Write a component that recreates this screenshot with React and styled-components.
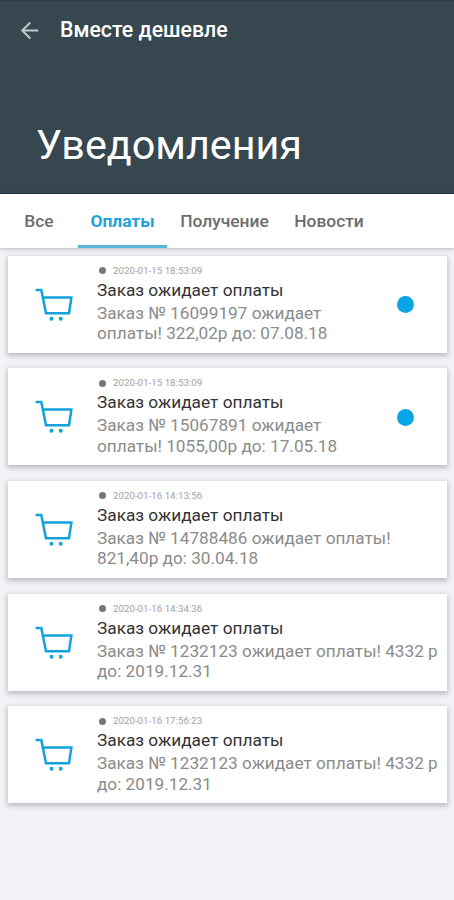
import React from "react";
import styled, { createGlobalStyle } from "styled-components";

const GlobalStyle = createGlobalStyle`
  * { box-sizing: border-box; }
  body { margin: 0; background: #f2f2f7; font-family: Roboto, "Noto Sans", sans-serif; }
`;

const Screen = styled.div`
  display: flex;
  flex-direction: column;
  width: 454px;
  height: 900px;
  overflow: hidden;
  background: #f2f2f7;
`;

const Header = styled.header`
  display: flex;
  flex-direction: column;
  justify-content: space-between;
  height: 194px;
  padding: 14px 20px 21px;
  background: #37474f;
  border-top: 1px solid #2f3c44;
  border-bottom: 1px solid #22323b;
  color: #fff;
`;

const Toolbar = styled.div`
  display: flex;
  align-items: center;
  height: 30px;
`;

const BackButton = styled.button`
  display: flex;
  width: 20px;
  height: 20px;
  margin: 2px 20px 0 0;
  padding: 0;
  border: 0;
  background: none;
  color: #c3cacd;
`;

const AppName = styled.span`
  font-size: 21.3px;
  font-weight: 500;
  line-height: 30px;
  white-space: nowrap;
`;

const PageTitle = styled.h1`
  margin: 0 0 0 16px;
  font-size: 41.3px;
  font-weight: 400;
  line-height: 54px;
  white-space: nowrap;
`;

const Tabs = styled.nav`
  display: flex;
  flex: none;
  height: 54px;
  background: #fff;
  box-shadow: 0 1px 4px rgba(60, 60, 70, 0.35);
`;

const Tab = styled.button`
  width: ${(p) => p.$width}px;
  padding: 3px 0 0;
  border: 0;
  border-bottom: 3px solid ${(p) => (p.$active ? "#5ab6d9" : "transparent")};
  background: none;
  color: ${(p) => (p.$active ? "#1ba3da" : "#6c6c6c")};
  font-family: inherit;
  font-size: 17.4px;
  font-weight: ${(p) => (p.$active ? 700 : 500)};
  white-space: nowrap;
`;

const List = styled.main`
  display: flex;
  flex-direction: column;
  gap: 15.7px;
  padding: 7.5px 7.5px 0;
`;

const Card = styled.article`
  display: flex;
  flex: none;
  height: 97px;
  background: #fff;
  box-shadow: 0 2px 5px 1px rgba(50, 50, 65, 0.28);
`;

const IconCell = styled.div`
  flex: none;
  width: 89.5px;
  padding: 31px 0 0 27.5px;
`;

const Content = styled.div`
  flex: none;
  width: 344px;
`;

const Meta = styled.div`
  display: flex;
  align-items: center;
  gap: 7px;
  height: 12px;
  margin: 9px 0 0 2px;
  color: #a2a2a2;
  font-size: 9.75px;
  line-height: 12px;
`;

const MetaDot = styled.span`
  width: 7px;
  height: 7px;
  border-radius: 50%;
  background: #777;
`;

const CardTitle = styled.h2`
  margin: 3px 0 2px;
  color: #333;
  font-size: 17.25px;
  font-weight: 400;
  line-height: 21px;
`;

const Message = styled.p`
  margin: 0;
  color: #8b8b8b;
  font-size: 17.2px;
  line-height: 20.5px;
  white-space: pre;
`;

const Unread = styled.span`
  flex: none;
  width: 17px;
  height: 17px;
  margin: 40.5px 0 0 -44px;
  border-radius: 50%;
  background: #08a5e6;
`;

const CartIcon = () => (
  <svg width="38" height="36" viewBox="0 0 38 36" fill="none" stroke="#14a2dc" strokeWidth="2.5">
    <path d="M0.6 2.9H6.3L11 26.3H34L36.4 10.6H8" />
    <circle cx="16.5" cy="31.8" r="2" fill="#14a2dc" stroke="none" />
    <circle cx="25.7" cy="31.8" r="2" fill="#14a2dc" stroke="none" />
  </svg>
);

const BackIcon = () => (
  <svg width="20" height="20" viewBox="0 0 20 20" fill="none" stroke="currentColor" strokeWidth="1.9">
    <path d="M18.3 9.5H2.2M10.3 1.5L2.2 9.5L10.3 17.5" />
  </svg>
);

const tabs = [
  { label: "Все", width: 78 },
  { label: "Оплаты", width: 89, active: true },
  { label: "Получение", width: 115 },
  { label: "Новости", width: 94 },
];

const items = [
  { date: "2020-01-15 18:53:09", text: "Заказ № 16099197 ожидает\nоплаты! 322,02р до: 07.08.18", unread: true },
  { date: "2020-01-15 18:53:09", text: "Заказ № 15067891 ожидает\nоплаты! 1055,00р до: 17.05.18", unread: true },
  { date: "2020-01-16 14:13:56", text: "Заказ № 14788486 ожидает оплаты!\n821,40р до: 30.04.18" },
  { date: "2020-01-16 14:34:36", text: "Заказ № 1232123 ожидает оплаты! 4332 р\nдо: 2019.12.31" },
  { date: "2020-01-16 17:56:23", text: "Заказ № 1232123 ожидает оплаты! 4332 р\nдо: 2019.12.31" },
];

export default function App() {
  return (
    <Screen>
      <GlobalStyle />
      <Header>
        <Toolbar>
          <BackButton aria-label="Назад"><BackIcon /></BackButton>
          <AppName>Вместе дешевле</AppName>
        </Toolbar>
        <PageTitle>Уведомления</PageTitle>
      </Header>
      <Tabs>
        {tabs.map((t) => (
          <Tab key={t.label} $width={t.width} $active={t.active}>{t.label}</Tab>
        ))}
      </Tabs>
      <List>
        {items.map((item, i) => (
          <Card key={i}>
            <IconCell><CartIcon /></IconCell>
            <Content>
              <Meta><MetaDot />{item.date}</Meta>
              <CardTitle>Заказ ожидает оплаты</CardTitle>
              <Message>{item.text}</Message>
            </Content>
            {item.unread && <Unread />}
          </Card>
        ))}
      </List>
    </Screen>
  );
}
